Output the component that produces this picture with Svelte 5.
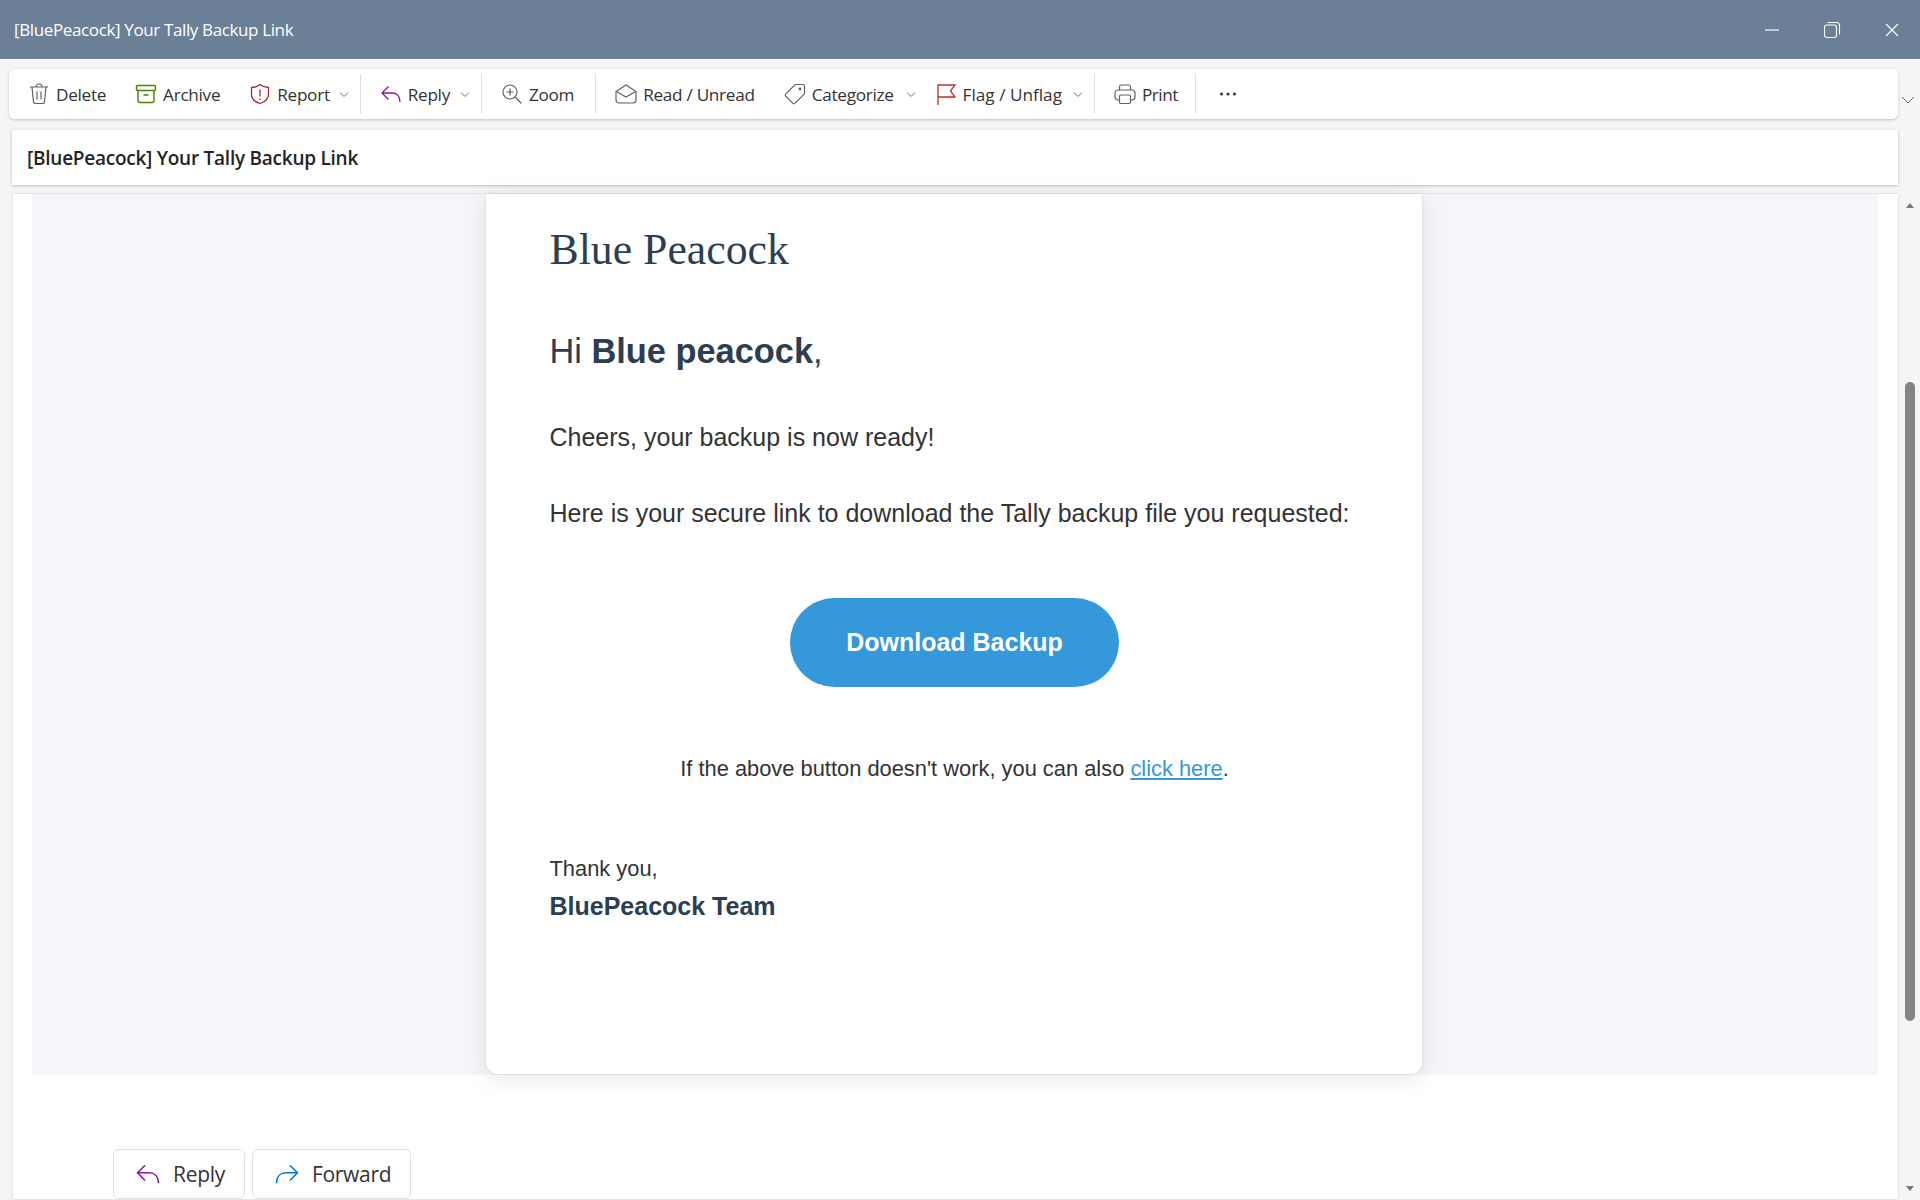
<script lang="ts">
  const subject = "[BluePeacock] Your Tally Backup Link";
</script>

{#snippet replyIcon(size: number)}
  <svg width={size} height={size} viewBox="0 0 24 24" fill="none" stroke="#881798" stroke-width="1.3">
    <path d="M9.5 4.5 3 11l6.5 6.5M3 11h10c4.5 0 8 3 8 9" />
  </svg>
{/snippet}

{#snippet chevron()}
  <svg class="chev" width="12" height="12" viewBox="0 0 12 12" fill="none" stroke="#707070" stroke-width="1">
    <path d="M2 4.5 6 8.500l4-4" />
  </svg>
{/snippet}

<div class="window">
  <header class="titlebar">
    <span class="title">{subject}</span>
    <div class="controls">
      <svg width="16" height="16" viewBox="0 0 16 16" stroke="#fff" fill="none" stroke-width="1.1"><path d="M1 8h14" /></svg>
      <svg width="18" height="18" viewBox="0 0 18 18" stroke="#fff" fill="none" stroke-width="1.1">
        <rect x="1.500" y="4" width="12" height="12.500" rx="2.500" />
        <path d="M4.500 1.500h9a3 3 0 0 1 3 3v9" />
      </svg>
      <svg width="16" height="16" viewBox="0 0 16 16" stroke="#fff" fill="none" stroke-width="1.1"><path d="M2 2l12 12M14 2 2 14" /></svg>
    </div>
  </header>

  <div class="toolrow">
    <nav class="toolbar">
      <button class="btn">
        <svg width="24" height="24" viewBox="0 0 24 24" fill="none" stroke="#616161" stroke-width="1.200">
          <path d="M3 5h18M9 5a3 3 0 0 1 6 0M5 5l1.500 15a2 2 0 0 0 2 1.500h7a2 2 0 0 0 2-1.500L19 5M10 9.500v8M14 9.500v8" />
        </svg>
        Delete
      </button>
      <button class="btn">
        <svg width="24" height="24" viewBox="0 0 24 24" fill="none" stroke="#498205" stroke-width="1.400">
          <rect x="2.500" y="3.500" width="19" height="5" rx="1" />
          <path d="M4 8.500v10a2 2 0 0 0 2 2h12a2 2 0 0 0 2-2v-10M9.500 13h5" />
        </svg>
        Archive
      </button>
      <button class="btn has-menu">
        <svg width="24" height="24" viewBox="0 0 24 24" fill="none" stroke="#a4262c" stroke-width="1.300">
          <path d="M12 2.500c2.500 2 5.500 3 8.500 3V12c0 5-3.500 8-8.500 9.500C7 20 3.500 17 3.500 12V5.500c3 0 6-1 8.500-3z" />
          <path d="M12 7.500v7M12 16.500v1.500" />
        </svg>
        Report
        {@render chevron()}
      </button>
      <span class="sep"></span>
      <button class="btn has-menu reply">
        {@render replyIcon(24)}
        Reply
        {@render chevron()}
      </button>
      <span class="sep"></span>
      <button class="btn">
        <svg width="24" height="24" viewBox="0 0 24 24" fill="none" stroke="#616161" stroke-width="1.200">
          <circle cx="10" cy="10" r="7" />
          <path d="M15 15l6.500 6.500M10 6.500v7M6.500 10h7" />
        </svg>
        Zoom
      </button>
      <span class="sep"></span>
      <button class="btn">
        <svg width="24" height="24" viewBox="0 0 24 24" fill="none" stroke="#616161" stroke-width="1.200">
          <path d="M2 9.500 12 3l10 6.500V18a3 3 0 0 1-3 3H5a3 3 0 0 1-3-3z" />
          <path d="M2.500 9.500 12 15l9.500-5.500" />
        </svg>
        Read / Unread
      </button>
      <button class="btn has-menu wide">
        <svg width="24" height="24" viewBox="0 0 24 24" fill="none" stroke="#616161" stroke-width="1.200">
          <path d="M13 2.500h7a1.500 1.500 0 0 1 1.500 1.500v7a2 2 0 0 1-.6 1.400l-9 9a1.500 1.500 0 0 1-2 0l-7.300-7.300a1.500 1.500 0 0 1 0-2l9-9A2 2 0 0 1 13 2.500z" />
          <circle cx="17" cy="7" r=".8" fill="#616161" />
        </svg>
        Categorize
        {@render chevron()}
      </button>
      <button class="btn has-menu flag">
        <svg width="24" height="24" viewBox="0 0 24 24" fill="none" stroke="#bc2f32" stroke-width="1.300">
          <path d="M4 23V3h17l-4.500 6 4.500 6H4" />
        </svg>
        Flag / Unflag
        {@render chevron()}
      </button>
      <span class="sep"></span>
      <button class="btn print">
        <svg width="24" height="24" viewBox="0 0 24 24" fill="none" stroke="#616161" stroke-width="1.200">
          <path d="M6.500 8V5a2 2 0 0 1 2-2h7a2 2 0 0 1 2 2v3" />
          <path d="M6.500 18H5a3 3 0 0 1-3-3v-4a3 3 0 0 1 3-3h14a3 3 0 0 1 3 3v4a3 3 0 0 1-3 3h-1.500" />
          <rect x="6.500" y="13" width="11" height="8.500" rx="1.500" />
        </svg>
        Print
      </button>
      <span class="sep"></span>
      <button class="btn more" aria-label="More">
        <svg width="20" height="6" viewBox="0 0 20 6" fill="#333"><circle cx="3.500" cy="3" r="1.500" /><circle cx="10" cy="3" r="1.500" /><circle cx="16.500" cy="3" r="1.500" /></svg>
      </button>
    </nav>
    <svg class="expand" width="14" height="14" viewBox="0 0 14 14" fill="none" stroke="#666" stroke-width="1"><path d="M1 4l6 6 6-6" /></svg>
  </div>

  <div class="subject">{subject}</div>

  <div class="pane-row">
    <main class="pane">
      <section class="mail-bg">
        <article class="card">
          <h1>Blue Peacock</h1>
          <h2>Hi <strong>Blue peacock</strong>,</h2>
          <p class="lead">Cheers, your backup is now ready!</p>
          <p class="lead">Here is your secure link to download the Tally backup file you requested:</p>
          <div class="cta"><span class="download">Download Backup</span></div>
          <p class="alt">If the above button doesn't work, you can also <a href="#top">click here</a>.</p>
          <p class="thanks">Thank you,</p>
          <p class="team">BluePeacock Team</p>
        </article>
      </section>
      <div class="actions">
        <button class="action">
          {@render replyIcon(28)}
          Reply
        </button>
        <button class="action">
          <svg width="28" height="28" viewBox="0 0 24 24" fill="none" stroke="#0078d4" stroke-width="1.300">
            <path d="M14.500 4.500 21 11l-6.500 6.500M21 11h-10c-4.500 0-8 3-8 9" />
          </svg>
          Forward
        </button>
      </div>
    </main>
    <aside class="scrollbar">
      <span class="arrow up"></span>
      <span class="track"><span class="thumb"></span></span>
      <span class="arrow down"></span>
    </aside>
  </div>
</div>

<style>
  :global(body) {
    margin: 0;
    background: #f5f5f5;
  }

  .window {
    width: 1920px;
    height: 1200px;
    overflow: hidden;
    display: flex;
    flex-direction: column;
    font-family: "Open Sans", "Noto Sans", sans-serif;
    color: #242424;
  }

  .titlebar {
    height: 59px;
    flex: none;
    background: #6b7f97;
    color: #fff;
    display: flex;
    align-items: center;
    justify-content: space-between;
    padding: 0 20px 0 14px;
  }

  .title {
    font-size: 17px;
    letter-spacing: -0.37px;
  }

  .controls {
    display: flex;
    align-items: center;
    gap: 43px;
  }

  .toolrow {
    display: flex;
    align-items: center;
    margin: 10px 0 0 9px;
  }

  .toolbar {
    width: 1889px;
    height: 50px;
    box-sizing: border-box;
    padding-left: 4px;
    background: #fff;
    border-radius: 6px;
    box-shadow: 0 1px 3px rgba(0, 0, 0, 0.22);
    display: flex;
    align-items: center;
  }

  .expand {
    margin: 12px 0 0 3px;
  }

  .btn {
    display: flex;
    align-items: center;
    gap: 5px;
    height: 50px;
    padding: 0 14px;
    border: none;
    background: none;
    font: inherit;
    font-size: 17.200px;
    letter-spacing: -0.3px;
    color: #333;
    white-space: nowrap;
  }

  .btn.has-menu {
    padding-right: 3px;
  }

  .chev {
    margin-left: 3px;
  }

  .btn.reply .chev {
    margin-left: 4px;
  }

  .btn.wide .chev {
    margin-left: 6px;
  }

  .btn.flag {
    letter-spacing: 0;
  }

  .btn.flag .chev {
    margin-left: 5px;
  }

  .btn.print {
    padding-right: 10px;
    letter-spacing: -0.5px;
  }

  .btn.more {
    padding: 0 17px 0 18px;
  }

  .sep {
    width: 1px;
    height: 40px;
    margin: 0 4px 0 7px;
    background: #e0e0e0;
  }

  .subject {
    flex: none;
    width: 1886px;
    height: 55px;
    margin: 11px 0 0 12px;
    padding-left: 15px;
    box-sizing: border-box;
    display: flex;
    align-items: center;
    background: #fff;
    box-shadow: 0 1px 3px rgba(0, 0, 0, 0.22);
    font-size: 19px;
    font-weight: 600;
    letter-spacing: -0.25px;
  }

  .pane-row {
    flex: 1;
    min-height: 0;
    display: flex;
    margin: 9px 0 1px 13px;
  }

  .pane {
    width: 1885px;
    background: #fff;
    box-shadow: 0 0 2px rgba(0, 0, 0, 0.2);
    display: flex;
    flex-direction: column;
    padding: 0 20px 0 19px;
    box-sizing: border-box;
  }

  .mail-bg {
    height: 881px;
    background: #f5f6fa;
    display: flex;
    justify-content: center;
    padding-right: 3px;
  }

  .card {
    width: 936px;
    height: 880px;
    box-sizing: border-box;
    padding: 0 62px 0 64px;
    background: #fff;
    border-radius: 0 0 12px 12px;
    box-shadow: 0 0 2px rgba(0, 0, 0, 0.12), 0 4px 24px rgba(0, 0, 0, 0.1);
    font-family: "Liberation Sans", Arial, sans-serif;
    color: #333;
  }

  h1 {
    margin: 0;
    padding-top: 30px;
    font: 400 43.750px/50px "Liberation Serif", "Times New Roman", serif;
    color: #2c3e50;
  }

  h2 {
    margin: 52px 0 0;
    font-size: 34.375px;
    line-height: 50px;
    font-weight: 400;
    color: #2c3e50;
  }

  .lead {
    margin: 46px 0 0;
    font-size: 25px;
    line-height: 30px;
  }

  .cta {
    display: flex;
    justify-content: center;
    margin-top: 70px;
  }

  .download {
    width: 329px;
    height: 89px;
    border-radius: 45px;
    display: flex;
    align-items: center;
    justify-content: center;
    background: #3498db;
    color: #fff;
    font-size: 25px;
    font-weight: 700;
  }

  .alt {
    margin: 68px 0 0;
    text-align: center;
    font-size: 21.875px;
    line-height: 28px;
  }

  .alt a {
    color: #3498db;
  }

  .thanks {
    margin: 72px 0 0;
    font-size: 21.875px;
    line-height: 28px;
  }

  .team {
    margin: 9px 0 0;
    font-size: 25px;
    line-height: 28px;
    font-weight: 700;
    color: #2c3e50;
  }

  .actions {
    margin-top: auto;
    padding-left: 81px;
    display: flex;
    gap: 7px;
  }

  .action {
    height: 50px;
    display: flex;
    align-items: center;
    gap: 11px;
    padding: 0 19px 0 20px;
    background: #fff;
    border: 1px solid #e1e1e1;
    border-radius: 6px;
    font: inherit;
    font-size: 21px;
    letter-spacing: -0.3px;
    color: #333;
  }

  .scrollbar {
    flex: 1;
    display: flex;
    flex-direction: column;
    align-items: center;
    padding: 9px 0 8px 2px;
  }

  .track {
    flex: 1;
    width: 10px;
    padding-top: 174px;
    box-sizing: border-box;
  }

  .thumb {
    display: block;
    width: 10px;
    height: 639px;
    border-radius: 5px;
    background: #848484;
  }

  .arrow {
    width: 0;
    height: 0;
    border-left: 4px solid transparent;
    border-right: 4px solid transparent;
  }

  .arrow.up {
    border-bottom: 5px solid #777;
  }

  .arrow.down {
    border-top: 5px solid #777;
  }
</style>
